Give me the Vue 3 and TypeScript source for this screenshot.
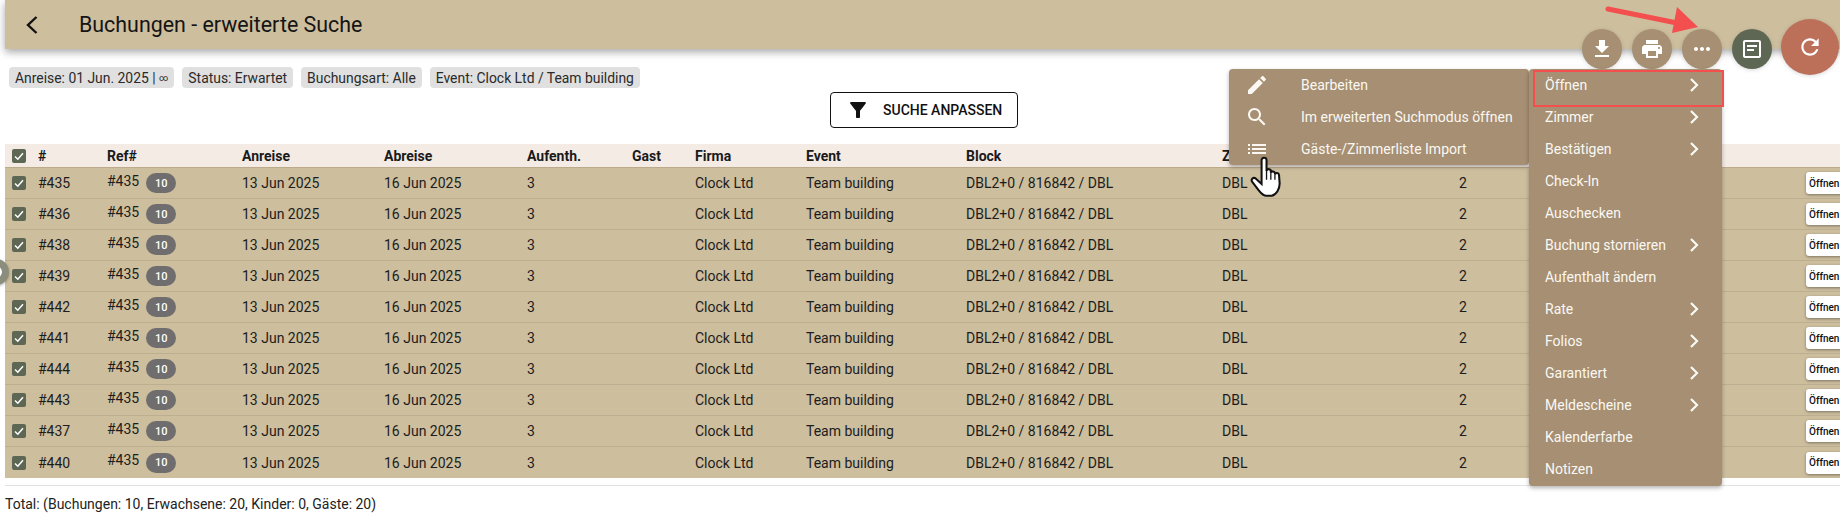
<template>
  <div class="page">
    <header class="topbar">
      <svg class="backIcon" viewBox="0 0 14 20" width="14" height="20"><path d="M11.500 2 3 10l8.500 8" /></svg>
      <h1 class="title">Buchungen - erweiterte Suche</h1>
    </header>

    <div class="chips">
      <span class="chip">Anreise: 01 Jun. 2025 |&nbsp;<small class="infinity">∞</small></span>
      <span v-for="chip of chips" :key="chip" class="chip">{{ chip }}</span>
    </div>

    <div class="searchRow">
      <button class="searchBtn">
        <svg viewBox="0 0 24 24" width="24" height="24"><path d="M4.250 5.610C6.270 8.200 10 13 10 13v6c0 .55.45 1 1 1h2c.55 0 1-.45 1-1v-6s3.720-4.800 5.740-7.390c.51-.66.04-1.610-.79-1.610H5.040c-.83 0-1.300.95-.79 1.610z" /></svg>
        <span>SUCHE ANPASSEN</span>
      </button>
    </div>

    <table class="bookings">
      <colgroup>
        <col v-for="(width, index) of columnWidths" :key="index" :style="{ width: width + 'px' }" />
      </colgroup>
      <thead>
        <tr>
          <th><span class="check"><svg viewBox="0 0 14 14" width="14" height="14"><path d="m3 7.500 2.800 2.700L11 4.300" /></svg></span></th>
          <th v-for="title of titles" :key="title">{{ title }}</th>
          <th></th>
        </tr>
      </thead>
      <tbody>
        <tr v-for="id of bookingIds" :key="id">
          <td><span class="check"><svg viewBox="0 0 14 14" width="14" height="14"><path d="m3 7.500 2.800 2.700L11 4.300" /></svg></span></td>
          <td>#{{ id }}</td>
          <td class="refCell"><span class="ref">#435</span><span class="badge">10</span></td>
          <td>13 Jun 2025</td>
          <td>16 Jun 2025</td>
          <td>3</td>
          <td></td>
          <td>Clock Ltd</td>
          <td>Team building</td>
          <td>DBL2+0 / 816842 / DBL</td>
          <td>DBL</td>
          <td>2</td>
          <td class="openCell"><button class="openBtn">Öffnen</button></td>
        </tr>
      </tbody>
    </table>

    <footer class="total">Total: (Buchungen: 10, Erwachsene: 20, Kinder: 0, Gäste: 20)</footer>

    <!-- floating things on top of the page -->
    <span class="ring"></span>

    <div class="fabs">
      <button class="fab tan"><svg viewBox="0 0 24 24" width="24" height="24"><path d="M19 9h-4V3H9v6H5l7 7 7-7zM5 18v2h14v-2H5z" /></svg></button>
      <button class="fab tan"><svg viewBox="0 0 24 24" width="24" height="24"><path d="M19 8H5c-1.660 0-3 1.340-3 3v6h4v4h12v-4h4v-6c0-1.660-1.340-3-3-3zm-3 11H8v-5h8v5zm3-7c-.55 0-1-.45-1-1s.45-1 1-1 1 .45 1 1-.45 1-1 1zm-1-9H6v4h12V3z" /></svg></button>
      <button class="fab tan"><svg viewBox="0 0 24 24" width="24" height="24"><path d="M6 10c-1.100 0-2 .9-2 2s.9 2 2 2 2-.9 2-2-.9-2-2-2zm12 0c-1.100 0-2 .9-2 2s.9 2 2 2 2-.9 2-2-.9-2-2-2zm-6 0c-1.100 0-2 .9-2 2s.9 2 2 2 2-.9 2-2-.9-2-2-2z" /></svg></button>
      <button class="fab olive"><svg viewBox="0 0 24 24" width="24" height="24"><path d="M19 5v14H5V5h14m0-2H5c-1.100 0-2 .9-2 2v14c0 1.100.9 2 2 2h14c1.100 0 2-.9 2-2V5c0-1.100-.9-2-2-2zM7 8h10v2H7zM7 12h7v2H7z" /></svg></button>
      <button class="fab big"><svg viewBox="0 0 24 24" width="26" height="26"><path d="M17.650 6.350C16.200 4.900 14.210 4 12 4c-4.420 0-7.990 3.580-7.990 8s3.570 8 7.990 8c3.730 0 6.840-2.550 7.730-6h-2.080c-.82 2.330-3.040 4-5.650 4-3.310 0-6-2.690-6-6s2.690-6 6-6c1.660 0 3.140.69 4.220 1.780L13 11h7V4l-2.350 2.350z" /></svg></button>
    </div>

    <div class="menu subMenu">
      <div v-for="item of subItems" :key="item.label" class="subItem">
        <svg viewBox="0 0 24 24" width="24" height="24"><path :d="item.icon" /></svg>
        <span>{{ item.label }}</span>
      </div>
    </div>

    <div class="menu mainMenu">
      <div v-for="item of menuItems" :key="item.label" class="menuItem">
        <span>{{ item.label }}</span>
        <svg v-if="item.sub" class="chevron" viewBox="0 0 12 16" width="12" height="16"><path d="m3 2 6 6-6 6" /></svg>
      </div>
    </div>

    <span class="highlight"></span>

    <svg class="arrow" viewBox="0 0 100 40" width="100" height="40">
      <path class="shaft" d="M4 6 78 21" />
      <path class="head" d="M73 4 94 24 68 30z" />
    </svg>

    <svg class="hand" viewBox="0 0 32 40" width="35" height="43">
      <path class="handShape" d="M10.500 4a2.300 2.300 0 0 1 4.600 0v10a2 2 0 0 1 4 .5v1a2 2 0 0 1 3.800.5v1a2 2 0 0 1 3.800.5l.6 8c0 5-3 10.500-7.300 11.500h-5c-3.500 0-5.500-3-7.500-5.500L1.800 24a2.200 2.200 0 0 1 3.200-3l5.500 5z" />
      <path class="handLines" d="M15.100 14v8M19.100 15.500V22M22.900 17v5" />
    </svg>
  </div>
</template>

<script setup lang="ts">
const chips = ['Status: Erwartet', 'Buchungsart: Alle', 'Event: Clock Ltd / Team building']

const columnWidths = [33, 69, 135, 142, 143, 105, 63, 111, 160, 256, 237, 347, 34]
const titles = ['#', 'Ref#', 'Anreise', 'Abreise', 'Aufenth.', 'Gast', 'Firma', 'Event', 'Block', 'Zimmer', '']
const bookingIds = [435, 436, 438, 439, 442, 441, 444, 443, 437, 440]

const subItems = [
  {
    label: 'Bearbeiten',
    icon: 'M3 17.250V21h3.750L17.810 9.940l-3.750-3.750L3 17.250zM20.710 7.040c.39-.39.39-1.020 0-1.410l-2.340-2.340c-.39-.39-1.020-.39-1.410 0l-1.830 1.830 3.750 3.750 1.830-1.830z',
  },
  {
    label: 'Im erweiterten Suchmodus öffnen',
    icon: 'M15.500 14h-.79l-.28-.27C15.410 12.590 16 11.110 16 9.500 16 5.910 13.090 3 9.500 3S3 5.910 3 9.500 5.910 16 9.500 16c1.610 0 3.090-.59 4.230-1.570l.27.28v.79l5 4.990L20.490 19l-4.990-5zm-6 0C7.010 14 5 11.990 5 9.500S7.010 5 9.500 5 14 7.010 14 9.500 11.990 14 9.500 14z',
  },
  {
    label: 'Gäste-/Zimmerliste Import',
    icon: 'M3 13h2v-2H3v2zm0 4h2v-2H3v2zm0-8h2V7H3v2zm4 4h14v-2H7v2zm0 4h14v-2H7v2zM7 7v2h14V7H7z',
  },
]

const menuItems = [
  { label: 'Öffnen', sub: true },
  { label: 'Zimmer', sub: true },
  { label: 'Bestätigen', sub: true },
  { label: 'Check-In', sub: false },
  { label: 'Auschecken', sub: false },
  { label: 'Buchung stornieren', sub: true },
  { label: 'Aufenthalt ändern', sub: false },
  { label: 'Rate', sub: true },
  { label: 'Folios', sub: true },
  { label: 'Garantiert', sub: true },
  { label: 'Meldescheine', sub: true },
  { label: 'Kalenderfarbe', sub: false },
  { label: 'Notizen', sub: false },
]
</script>

<style>
html, body {
  margin: 0;
  background: #fff;
}
</style>

<style scoped>
.page {
  position: relative;
  width: 1840px;
  height: 516px;
  overflow: hidden;
  font-family: Roboto, "Liberation Sans", sans-serif;
  font-size: 14px;
  color: #1c1c1c;
  background: #fff;
}

.topbar {
  display: flex;
  align-items: center;
  height: 49px;
  margin-left: 5px;
  background: #cdbe9e;
  box-shadow: 0 3px 8px rgba(0, 0, 0, 0.35);
}

.backIcon {
  margin-left: 20px;
  fill: none;
  stroke: #111;
  stroke-width: 2.400;
}

.title {
  margin: 0 0 0 40px;
  font-size: 21.400px;
  font-weight: 400;
  color: #141414;
}

.chips {
  display: flex;
  gap: 8px;
  margin: 18px 0 0 9px;
}

.chip {
  display: flex;
  align-items: center;
  height: 21px;
  padding: 0 6px;
  border-radius: 4px;
  background: #e0e0e0;
  font-size: 13.900px;
  color: #2a2a2a;
}

.infinity {
  font-size: 9px;
}

.searchRow {
  display: flex;
  margin: 4px 0 0 830px;
}

.searchBtn {
  display: flex;
  align-items: center;
  width: 188px;
  height: 36px;
  padding: 0 0 0 15px;
  border: 1px solid #111;
  border-radius: 4px;
  background: #fff;
  font-family: inherit;
  font-size: 14px;
  font-weight: 500;
  color: #111;
}

.searchBtn svg {
  margin-right: 13px;
  fill: #111;
}

.bookings {
  width: 1835px;
  margin: 16px 0 0 5px;
  border-collapse: collapse;
  table-layout: fixed;
}

.bookings th,
.bookings td {
  padding: 0;
  text-align: left;
  white-space: nowrap;
}

.bookings th {
  height: 23px;
  background: #f4ebe5;
  border-bottom: 1px solid #bcab8b;
  font-size: 14px;
  font-weight: 700;
  color: #1a1a1a;
}

.bookings td {
  height: 30px;
  background: #cdbe9e;
  border-bottom: 1px solid #bcae90;
}

.bookings tbody tr:last-child td {
  border-bottom: none;
  height: 31px;
}

.check {
  display: flex;
  align-items: center;
  justify-content: center;
  width: 14px;
  height: 14px;
  margin-left: 7px;
  border-radius: 2px;
  background: #5e6753;
}

.check svg {
  fill: none;
  stroke: #fff;
  stroke-width: 1.500;
}

.ref {
  position: relative;
  top: -1px;
}

.badge {
  display: inline-flex;
  align-items: center;
  justify-content: center;
  width: 30px;
  height: 20px;
  margin-left: 7px;
  border-radius: 10px;
  background: #6f6d6d;
  color: #fff;
  font-size: 11px;
  font-weight: 500;
  vertical-align: middle;
}

.openCell {
  overflow: visible;
}

.openBtn {
  display: block;
  width: 44px;
  height: 22px;
  padding: 0 0 0 3px;
  border: none;
  border-radius: 3px;
  background: #fff;
  box-shadow: 0 1px 3px rgba(0, 0, 0, 0.4);
  font-family: inherit;
  font-size: 10px;
  font-weight: 500;
  text-align: left;
  color: #111;
}

.total {
  margin: 7px 0 0 5px;
  padding-top: 10px;
  border-top: 1px solid #e2e2e2;
  font-size: 14px;
  color: #222;
}

.ring {
  position: absolute;
  left: -17px;
  top: 259px;
  box-sizing: border-box;
  width: 26px;
  height: 26px;
  border: 7px solid #8b8d7d;
  border-radius: 50%;
  background: #fff;
  box-shadow: 0 1px 3px rgba(0, 0, 0, 0.3);
}

.fabs {
  position: absolute;
  left: 1582px;
  top: 19px;
  display: flex;
  align-items: flex-start;
  gap: 10px;
}

.fab {
  display: flex;
  align-items: center;
  justify-content: center;
  width: 40px;
  height: 40px;
  margin-top: 10px;
  padding: 0;
  border: none;
  border-radius: 50%;
  box-shadow: 0 1px 4px rgba(0, 0, 0, 0.15);
}

.fab svg {
  fill: #fff;
}

.tan {
  background: #a68f72;
}

.olive {
  background: #5e6753;
}

.big {
  width: 58px;
  height: 56px;
  margin: 0 0 0 -1px;
  background: #bc7059;
}

.menu {
  position: absolute;
  top: 69px;
  border-radius: 4px;
  background: #a68f72;
  color: #fbf8f3;
  box-shadow: 0 2px 4px rgba(0, 0, 0, 0.3);
}

.subMenu {
  left: 1229px;
  width: 300px;
}

.subItem {
  display: flex;
  align-items: center;
  height: 32px;
  padding-left: 16px;
}

.subItem svg {
  flex: none;
  margin-right: 32px;
  fill: #fbf8f3;
}

.mainMenu {
  left: 1529px;
  width: 193px;
  padding-bottom: 1px;
}

.menuItem {
  display: flex;
  align-items: center;
  justify-content: space-between;
  height: 32px;
  padding: 0 22px 0 16px;
}

.chevron {
  fill: none;
  stroke: #fbf8f3;
  stroke-width: 2.200;
}

.highlight {
  position: absolute;
  left: 1533px;
  top: 70px;
  width: 187px;
  height: 33px;
  border: 2px solid #f44f4f;
}

.arrow {
  position: absolute;
  left: 1604px;
  top: 3px;
}

.shaft {
  fill: none;
  stroke: #f44f4f;
  stroke-width: 5;
  stroke-linecap: round;
}

.head {
  fill: #f44f4f;
}

.hand {
  position: absolute;
  left: 1250px;
  top: 156px;
}

.handShape {
  fill: #fff;
  stroke: #111;
  stroke-width: 1.900;
}

.handLines {
  fill: none;
  stroke: #111;
  stroke-width: 1.200;
}
</style>
